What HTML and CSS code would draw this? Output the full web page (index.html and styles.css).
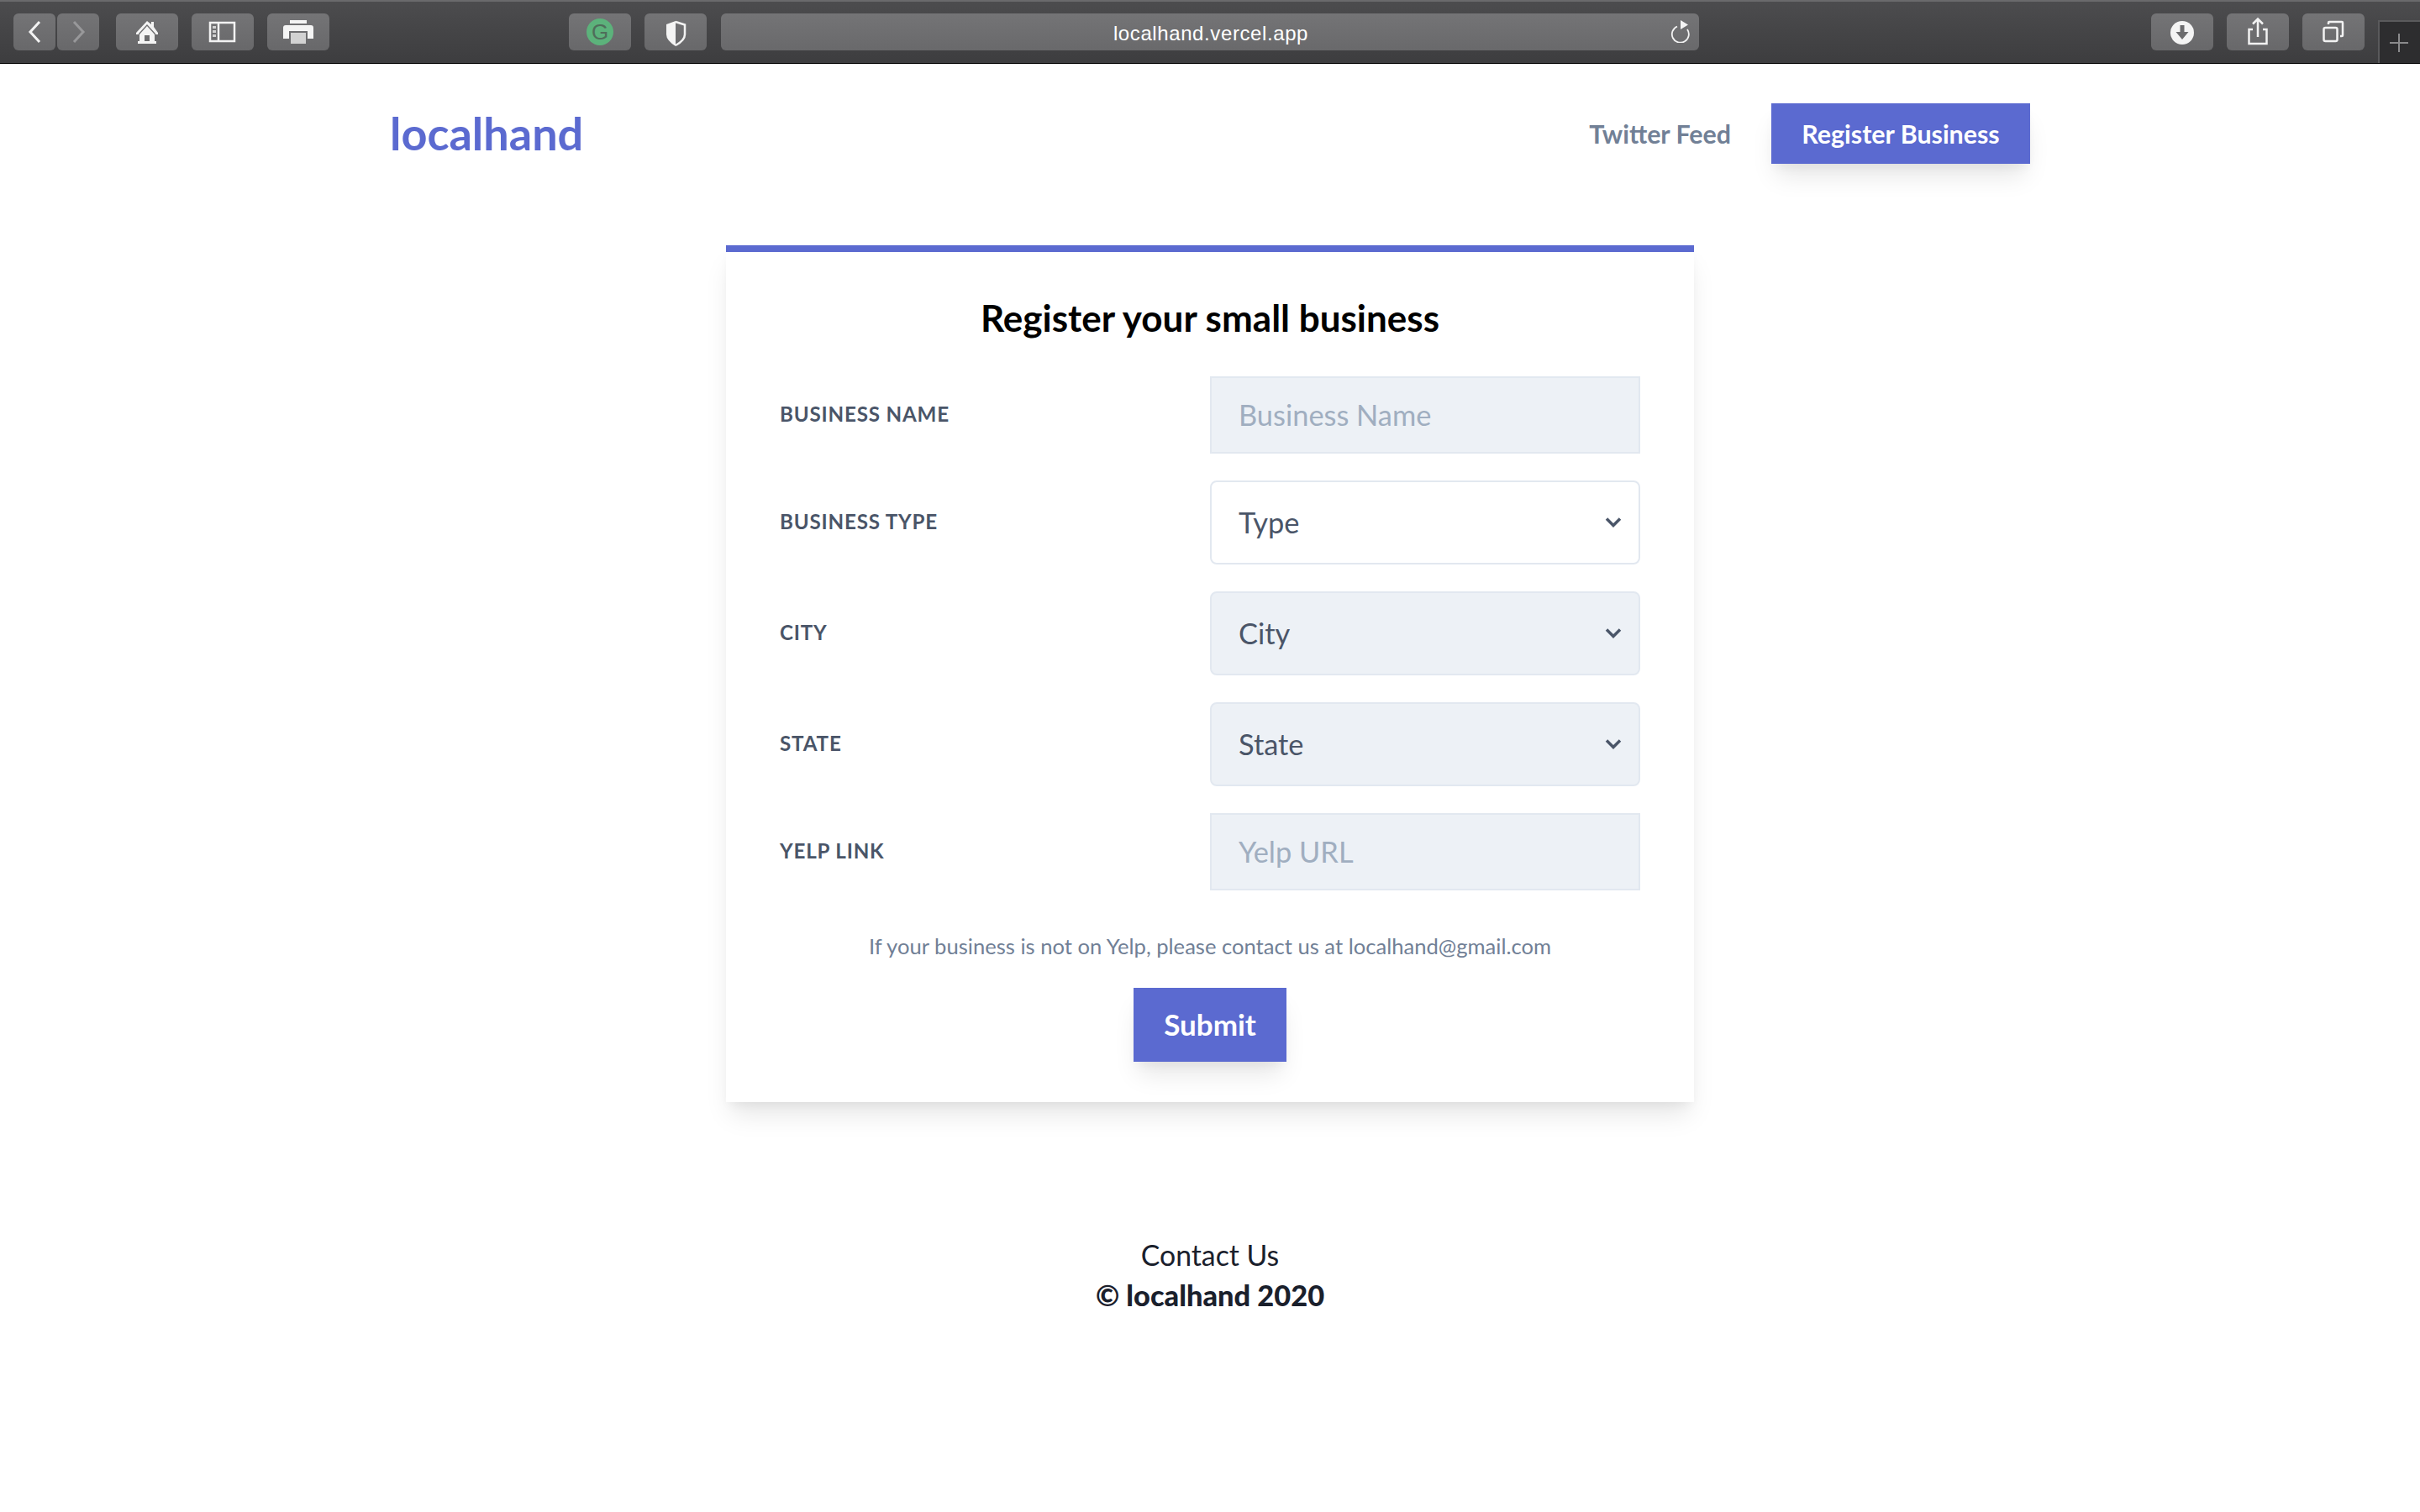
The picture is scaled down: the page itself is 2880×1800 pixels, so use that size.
FILE: index.html
```html
<!DOCTYPE html>
<html lang="en">
<head>
<meta charset="utf-8">
<title>localhand</title>
<link rel="stylesheet" href="styles.css">
</head>
<body>
<header class="toolbar">
  <div class="tool-group nav-pair">
    <div class="tool tool-half"><svg viewBox="0 0 50 44" width="50" height="44"><path class="line" d="M31 10 20 22 31 34"/></svg></div>
    <div class="tool tool-half"><svg viewBox="0 0 50 44" width="50" height="44"><path class="line dim" d="M20 10 31 22 20 34"/></svg></div>
  </div>
  <div class="tool-group main-tools">
    <div class="tool"><svg viewBox="0 0 74 44" width="74" height="44"><path class="fill" d="M37 9 24 23v2h3v-1l10-11 10 11v1h3v-2L45 16v-6h-3v3z"/><path class="fill" fill-rule="evenodd" d="M37 15 28 25v8h-2v3h22v-3h-2v-8zM34 26h6v7h-6z"/></svg></div>
    <div class="tool"><svg viewBox="0 0 74 44" width="74" height="44"><rect class="line thin" x="22" y="11" width="29" height="22"/><path class="line thin" d="M32 11v22"/><path class="fill soft" d="M25 15h4v3h-4zM25 20h4v3h-4zM25 25h4v3h-4z"/></svg></div>
    <div class="tool"><svg viewBox="0 0 74 44" width="74" height="44"><path class="fill" d="M27 8h20v4H27zM22 14h30q3 0 3 3v13h-7v-9H26v9h-7V17q0-3 3-3z"/><rect class="fill soft" x="28" y="23" width="18" height="13"/></svg></div>
  </div>
  <div class="tool-group ext-tools">
    <div class="tool"><span class="grammarly">G</span></div>
    <div class="tool"><svg viewBox="0 0 74 44" width="74" height="44"><path class="fill" d="M37 9 26 13v12q0 7 11 14z"/><path class="line thin" d="M37 10 48 13.500v11.500q0 7-11 13"/></svg></div>
  </div>
  <div class="address">
    <span class="address-text">localhand.vercel.app</span>
    <svg class="reload" viewBox="0 0 24 28" width="24" height="28"><path class="line hair" d="M8 8.500A10 10 0 1 0 20 12"/><path class="fill" d="M12 1v11l9-5.500z"/></svg>
  </div>
  <div class="tool-group right-tools">
    <div class="tool"><svg viewBox="0 0 74 44" width="74" height="44"><circle class="fill" cx="37" cy="23" r="14"/><path class="cut" d="M34.500 14h5v8h5L37 31l-7.500-9h5z"/></svg></div>
    <div class="tool"><svg viewBox="0 0 74 44" width="74" height="44"><path class="line thin" d="M31 19h-4.500v17h21V19H43M37 28V7M31 12.500 37 6.500l6 6"/></svg></div>
    <div class="tool"><svg viewBox="0 0 74 44" width="74" height="44"><rect class="line thin" x="25.500" y="17" width="16" height="16" rx="2"/><path class="line thin" d="M31 13v-2q0-1 1-1h15q1 0 1 1v15q0 1-1 1h-2"/></svg></div>
  </div>
  <div class="new-tab"><svg viewBox="0 0 22 22" width="22" height="22"><path class="plus" d="M11 0v22M0 11h22"/></svg></div>
</header>

<div class="page">
  <nav class="site-nav">
    <a class="logo">localhand</a>
    <div class="nav-links">
      <a class="nav-link">Twitter Feed</a>
      <a class="btn btn-nav">Register Business</a>
    </div>
  </nav>

  <main class="card">
    <h1 class="card-title">Register your small business</h1>
    <form class="form-grid">
      <label class="field-label">Business Name</label>
      <input class="field field-input" placeholder="Business Name">

      <label class="field-label">Business Type</label>
      <div class="select-wrap">
        <select class="field field-select field-white"><option>Type</option></select>
        <svg class="chevron" viewBox="0 0 20 20" width="20" height="20"><path d="M2 5.500 10 13.500 18 5.500"/></svg>
      </div>

      <label class="field-label">City</label>
      <div class="select-wrap">
        <select class="field field-select"><option>City</option></select>
        <svg class="chevron" viewBox="0 0 20 20" width="20" height="20"><path d="M2 5.500 10 13.500 18 5.500"/></svg>
      </div>

      <label class="field-label">State</label>
      <div class="select-wrap">
        <select class="field field-select"><option>State</option></select>
        <svg class="chevron" viewBox="0 0 20 20" width="20" height="20"><path d="M2 5.500 10 13.500 18 5.500"/></svg>
      </div>

      <label class="field-label">Yelp Link</label>
      <input class="field field-input" placeholder="Yelp URL">
    </form>
    <p class="note">If your business is not on Yelp, please contact us at localhand@gmail.com</p>
    <div class="submit-row"><a class="btn btn-submit">Submit</a></div>
  </main>

  <footer class="site-footer">
    <p class="contact">Contact Us</p>
    <p class="copyright">© localhand 2020</p>
  </footer>
</div>
</body>
</html>
```

FILE: styles.css
```css
* { box-sizing: border-box; }
html, body { margin: 0; padding: 0; height: 100%; background: #fff; overflow: hidden; }
body { font-family: "Lato", "Open Sans", sans-serif; color: #1a202c; }

/* Browser toolbar */
.toolbar {
  height: 76px;
  display: flex;
  align-items: flex-start;
  padding: 14px 0 0 16px;
  border-top: 2px solid #6a6a6c;
  border-bottom: 1px solid #000;
  background: linear-gradient(#4c4c4e, #3d3d3f);
}
.tool-group { display: flex; flex-shrink: 0; }
.nav-pair { gap: 2px; }
.main-tools { gap: 16px; margin-left: 20px; }
.ext-tools { gap: 16px; margin-left: 285px; }
.right-tools { gap: 16px; margin-left: 538px; }
.tool {
  width: 74px;
  height: 44px;
  border-radius: 6px;
  background: linear-gradient(#747476, #68686a);
  display: flex;
  align-items: center;
  justify-content: center;
}
.tool-half { width: 50px; }
.line { fill: none; stroke: #f2f2f2; stroke-width: 3; stroke-linejoin: miter; }
.line.thin { stroke-width: 2.500; }
.line.hair { stroke-width: 1.800; }
.line.dim { stroke: #98989a; }
.fill { fill: #f4f4f4; }
.fill.soft { fill: #d2d2d2; }
.cut { fill: #6c6c6e; }
.plus { stroke: #8a8a8c; stroke-width: 2; fill: none; }
.grammarly {
  width: 32px;
  height: 32px;
  border-radius: 50%;
  background: #5cb27b;
  color: #4f6d5a;
  font: 400 26px/32px "Liberation Sans", sans-serif;
  text-align: center;
}
.address {
  width: 1164px;
  height: 44px;
  margin-left: 17px;
  flex-shrink: 0;
  border-radius: 6px;
  background: linear-gradient(#747476, #69696b);
  display: flex;
  align-items: center;
  justify-content: center;
  position: relative;
}
.address-text {
  color: #fff;
  font: 400 24px/44px "Liberation Sans", sans-serif;
  letter-spacing: .6px;
  padding: 3px 0 0 2px;
}
.reload { position: absolute; right: 10px; top: 7px; }
.new-tab {
  width: 50px;
  height: 51px;
  margin-left: 16px;
  margin-top: 8px;
  flex-shrink: 0;
  background: #2d2d2f;
  border-left: 2px solid #5a5a5c;
  border-top: 2px solid #5a5a5c;
  display: flex;
  align-items: flex-start;
  padding: 14px 0 0 12px;
}

/* Site header */
.page { display: flex; flex-direction: column; align-items: center; }
.site-nav {
  width: 1952px;
  height: 119px;
  padding-top: 47px;
  display: flex;
  justify-content: space-between;
  align-items: flex-start;
}
.logo {
  color: #5b6ad0;
  font-weight: 700;
  font-size: 54px;
  line-height: 72px;
}
.nav-links { display: flex; align-items: center; gap: 48px; }
.nav-link { color: #718096; font-weight: 700; font-size: 30.400px; padding-bottom: 1px; }
.btn {
  background: #5b6ad0;
  color: #fff;
  font-weight: 700;
  display: flex;
  align-items: center;
  justify-content: center;
  box-shadow: 0 20px 30px -6px rgba(0,0,0,.1), 0 8px 12px -4px rgba(0,0,0,.05);
}
.btn-nav { width: 308px; height: 72px; font-size: 30.400px; padding-bottom: 1px; }

/* Card */
.card {
  width: 1152px;
  height: 1020px;
  margin-top: 97px;
  padding: 0 64px;
  border-top: 8px solid #5b6ad0;
  background: #fff;
  box-shadow: 0 20px 30px -6px rgba(0,0,0,.1), 0 8px 12px -4px rgba(0,0,0,.05);
}
.card-title {
  margin: 0;
  height: 148px;
  padding-top: 48px;
  text-align: center;
  font-size: 44px;
  line-height: 60px;
  font-weight: 700;
  color: #000;
}
.form-grid {
  display: grid;
  grid-template-columns: 512px 512px;
  row-gap: 32px;
  align-items: center;
}
.field-label {
  color: #4a5568;
  font-size: 24.200px;
  line-height: 28px;
  padding-bottom: 2px;
  font-weight: 700;
  letter-spacing: .8px;
  text-transform: uppercase;
}
.field {
  display: block;
  width: 100%;
  margin: 0;
  border: 2px solid #e2e8f0;
  background: #edf1f6;
  color: #4a5568;
  font-family: inherit;
  font-size: 34.400px;
  padding: 0 32px 2px;
  outline: none;
  appearance: none;
}
.field-input { height: 92px; border-radius: 0; }
.field-input::placeholder { color: #a0aec0; opacity: 1; }
.field-select { height: 100px; border-radius: 8px; }
.field-white { background: #fff; }
.select-wrap { position: relative; }
.chevron { position: absolute; right: 22px; top: 40px; }
.chevron path { fill: none; stroke: #4a5568; stroke-width: 3.500; }

.note {
  margin: 50px 0 0;
  height: 30px;
  text-align: center;
  color: #718096;
  font-size: 25.600px;
  line-height: 32px;
}
.submit-row { display: flex; justify-content: center; margin-top: 36px; }
.btn-submit { width: 182px; height: 88px; font-size: 35px; padding-bottom: 3px; }

/* Footer */
.site-footer { margin-top: 158px; text-align: center; color: #1a202c; }
.contact { margin: 0; font-size: 33.800px; line-height: 48px; }
.copyright { margin: 0; font-size: 34.400px; line-height: 48px; font-weight: 900; }
```
